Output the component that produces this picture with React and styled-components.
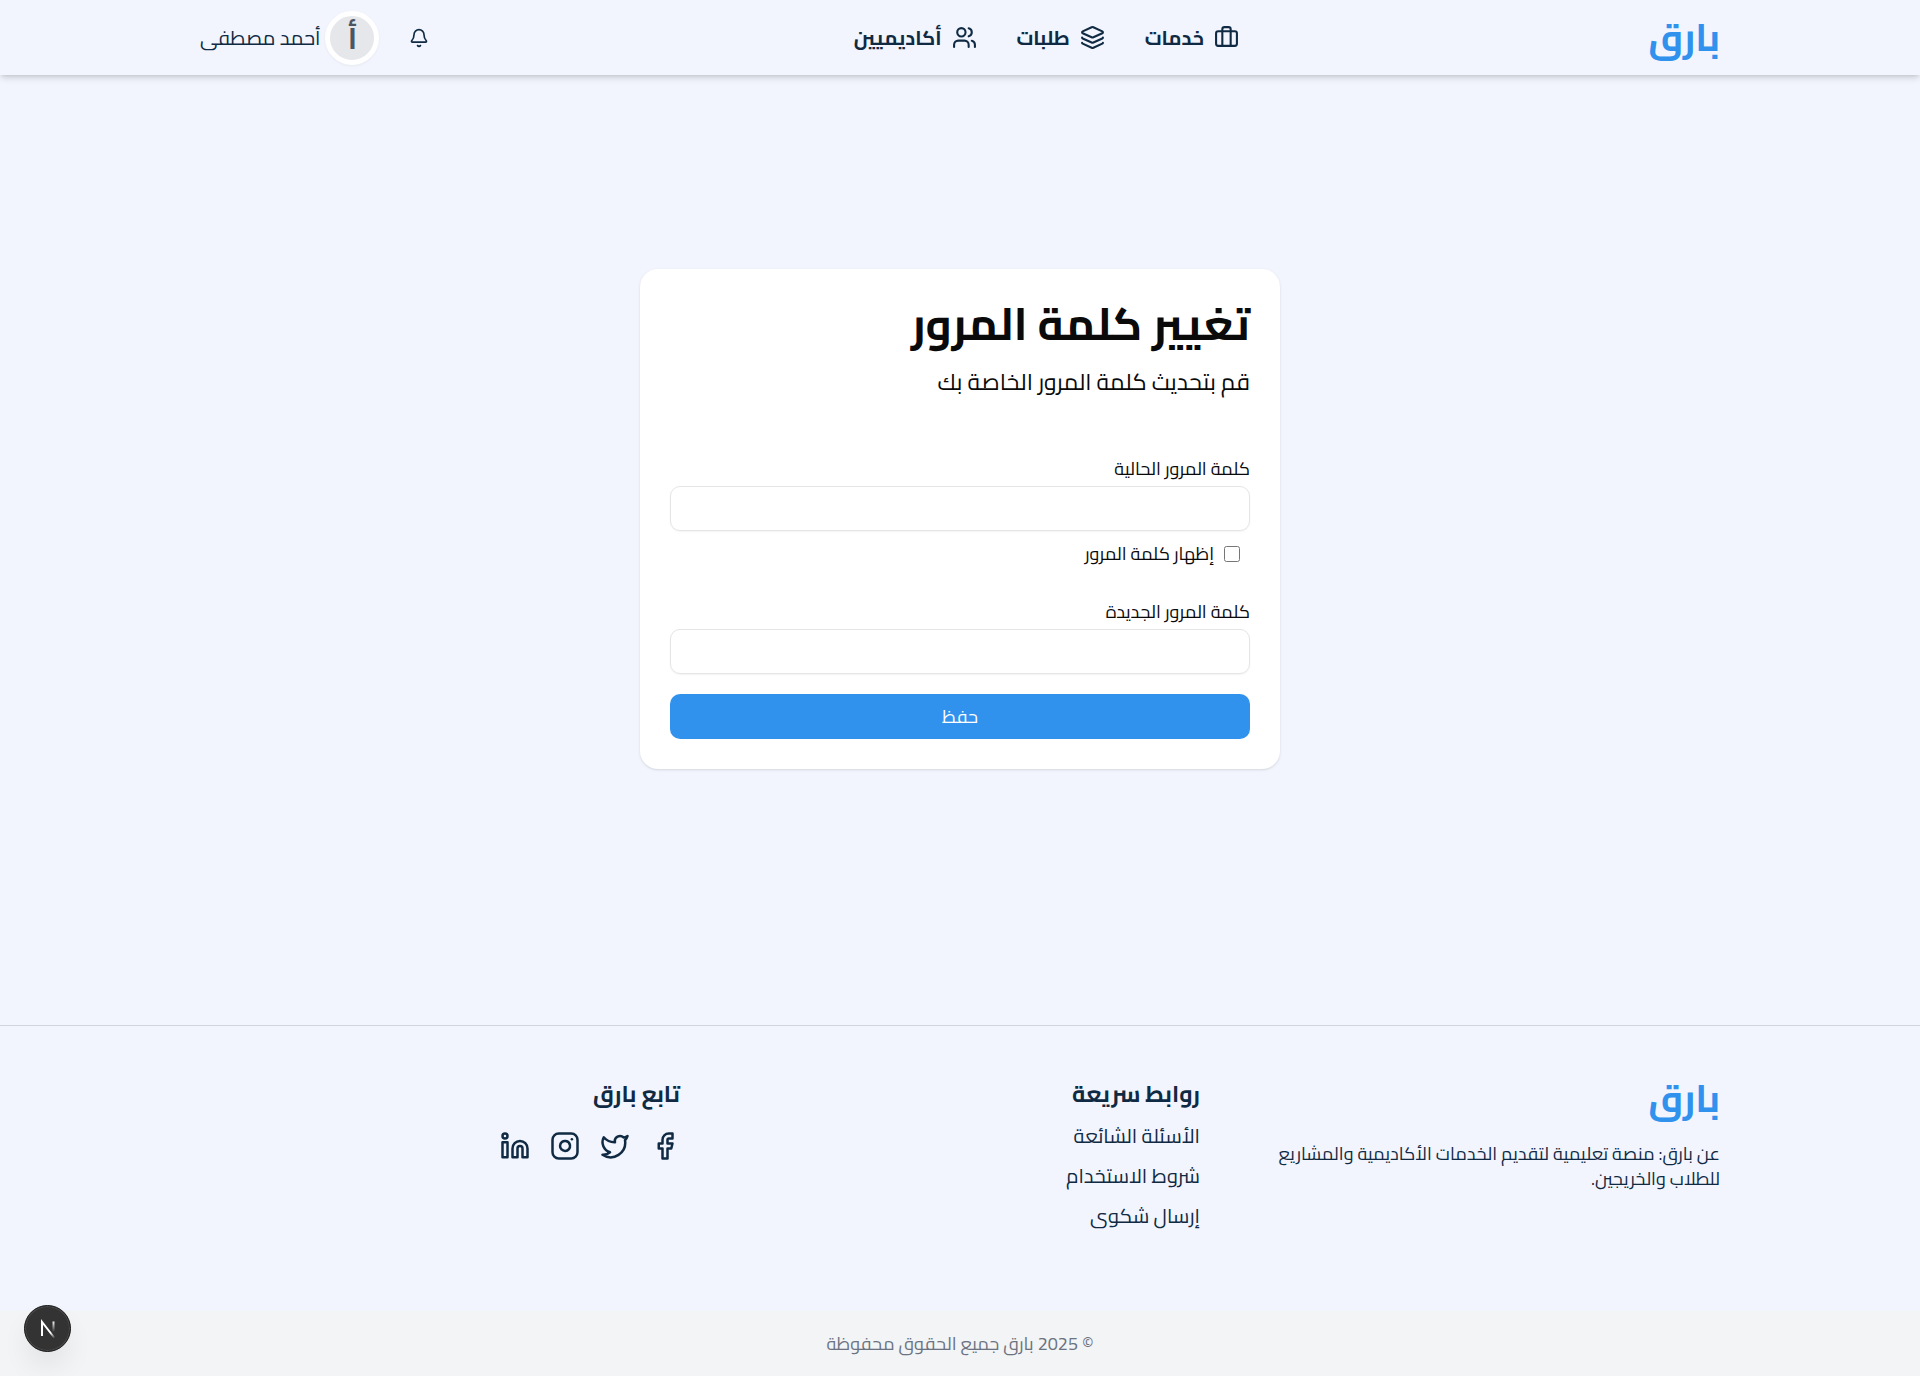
import React, { useState } from "react";
import styled, { createGlobalStyle } from "styled-components";
import {
  Bell,
  Briefcase,
  Layers,
  Users,
  Facebook,
  Twitter,
  Instagram,
  Linkedin,
} from "lucide-react";

const color = {
  page: "#f2f5fd",
  ink: "#102a43",
  primary: "#3092ed",
  line: "#e5e5e5",
};

const GlobalStyle = createGlobalStyle`
  *, *::before, *::after { box-sizing: border-box; }
  body {
    margin: 0;
    background: ${color.page};
    color: #0a0a0a;
    font-family: Cairo, "Noto Kufi Arabic", "Noto Sans", sans-serif;
    font-size: 20px;
    line-height: 30px;
  }
  h1, h2, p, ul { margin: 0; padding: 0; }
  ul { list-style: none; }
  a { color: inherit; text-decoration: none; }
  button, input { font: inherit; }
`;

const Page = styled.div`
  display: flex;
  flex-direction: column;
  min-height: 100vh;
`;

const Container = styled.div`
  width: 100%;
  max-width: 1520px;
  margin: 0 auto;
`;

const Header = styled.header`
  background: ${color.page};
  color: ${color.ink};
  box-shadow: 0 4px 6px -1px rgba(0, 0, 0, 0.1), 0 2px 4px -2px rgba(0, 0, 0, 0.1),
    0 2px 10px rgba(0, 0, 0, 0.06);
`;

const HeaderBar = styled(Container)`
  display: flex;
  align-items: center;
  justify-content: space-between;
  height: 75px;
`;

const Logo = styled.a`
  display: block;
  color: ${color.primary};
  font-size: 38px;
  font-weight: 700;
  line-height: 45px;
`;

const Nav = styled.nav`
  display: flex;
  gap: 40px;
`;

const NavLink = styled.a`
  display: flex;
  align-items: center;
  gap: 10px;
  font-weight: 700;
`;

const UserArea = styled.div`
  display: flex;
  align-items: center;
  gap: 15px;
`;

const IconButton = styled.button`
  display: flex;
  padding: 15px;
  border: 0;
  background: none;
  color: inherit;
  cursor: pointer;
`;

const Profile = styled.a`
  display: flex;
  align-items: center;
  gap: 5px;
`;

const Avatar = styled.span`
  display: flex;
  align-items: center;
  justify-content: center;
  width: 54px;
  height: 54px;
  border: 5px solid #fff;
  border-radius: 50%;
  background: #e5e7eb;
  box-shadow: 0 1px 3px rgba(0, 0, 0, 0.05);
  color: #4b5563;
  font-size: 30px;
  font-weight: 700;
`;

const Main = styled.main`
  flex: 1;
  display: flex;
  align-items: center;
  justify-content: center;
  padding: 30px 20px 92px;
`;

const Card = styled.section`
  width: 100%;
  max-width: 640px;
  padding: 30px;
  border-radius: 18px;
  background: #fff;
  box-shadow: 0 1px 3px rgba(0, 0, 0, 0.1), 0 1px 2px -1px rgba(0, 0, 0, 0.1);
`;

const Title = styled.h1`
  font-size: 45px;
  font-weight: 700;
  line-height: 50px;
`;

const Subtitle = styled.p`
  margin-top: 15px;
  font-size: 23px;
  line-height: 35px;
`;

const Form = styled.form`
  display: flex;
  flex-direction: column;
  margin-top: 57px;
  font-size: 18px;
  line-height: 25px;
`;

const Field = styled.div`
  display: flex;
  flex-direction: column;
  gap: 5px;
`;

const TextInput = styled.input`
  width: 100%;
  height: 45px;
  padding: 5px 15px;
  border: 1px solid ${color.line};
  border-radius: 10px;
  background: transparent;
  box-shadow: 0 1px 2px rgba(0, 0, 0, 0.05);
`;

const CheckLabel = styled.label`
  display: flex;
  align-items: center;
  gap: 10px;
  margin: 10px 10px 33px;
`;

const Checkbox = styled.input`
  width: 16px;
  height: 16px;
  margin: 0;
`;

const SubmitButton = styled.button`
  height: 45px;
  margin-top: 20px;
  border: 0;
  border-radius: 10px;
  background: ${color.primary};
  color: #fff;
  cursor: pointer;
`;

const Footer = styled.footer`
  border-top: 1px solid #d1d5db;
  color: ${color.ink};
`;

const FooterGrid = styled(Container)`
  display: grid;
  grid-template-columns: repeat(3, 1fr);
  gap: 40px;
  padding: 50px 0 80px;
`;

const About = styled.p`
  max-width: 448px;
  margin-top: 20px;
  font-size: 18px;
  line-height: 25px;
`;

const FooterHeading = styled.h2`
  font-size: 23px;
  font-weight: 700;
  line-height: 35px;
`;

const LinkList = styled.ul`
  display: grid;
  gap: 10px;
  margin-top: 10px;
`;

const SocialList = styled.ul`
  display: flex;
  gap: 20px;
  margin-top: 20px;

  a { display: block; }
  svg { display: block; }
`;

const Copyright = styled.p`
  padding: 20px;
  background: #f3f4f6;
  color: #6b7280;
  font-size: 18px;
  line-height: 25px;
  text-align: center;
`;

const DevBadge = styled.button`
  position: fixed;
  left: 24px;
  bottom: 24px;
  display: flex;
  align-items: center;
  justify-content: center;
  width: 47px;
  height: 47px;
  padding: 0;
  border: 1px solid #171717;
  border-radius: 50%;
  background: #333;
  box-shadow: inset 0 0 0 1px #4a4a4a, 0 16px 32px -8px rgba(0, 0, 0, 0.14);
  cursor: pointer;
`;

const navItems = [
  { label: "خدمات", Icon: Briefcase },
  { label: "طلبات", Icon: Layers },
  { label: "أكاديميين", Icon: Users },
];

const quickLinks = ["الأسئلة الشائعة", "شروط الاستخدام", "إرسال شكوى"];

const socials = [
  { label: "Facebook", Icon: Facebook },
  { label: "Twitter", Icon: Twitter },
  { label: "Instagram", Icon: Instagram },
  { label: "LinkedIn", Icon: Linkedin },
];

function NextMark() {
  return (
    <svg width="18" height="20" viewBox="0 0 18 20" fill="none" aria-hidden="true">
      <defs>
        <linearGradient id="diag" x1="9" y1="10" x2="16" y2="19" gradientUnits="userSpaceOnUse">
          <stop offset="0.4" stopColor="#fff" />
          <stop offset="1" stopColor="#fff" stopOpacity="0" />
        </linearGradient>
        <linearGradient id="stem" x1="14" y1="2" x2="14" y2="13" gradientUnits="userSpaceOnUse">
          <stop stopColor="#fff" />
          <stop offset="1" stopColor="#fff" stopOpacity="0" />
        </linearGradient>
      </defs>
      <path d="M3 17V3L15.500 19" stroke="url(#diag)" strokeWidth="2" />
      <path d="M14.500 2.500V13" stroke="url(#stem)" strokeWidth="2" />
    </svg>
  );
}

export default function App() {
  const [visible, setVisible] = useState(false);

  return (
    <Page dir="rtl" lang="ar">
      <GlobalStyle />
      <Header>
        <HeaderBar>
          <Logo href="#">بارق</Logo>
          <Nav>
            {navItems.map(({ label, Icon }) => (
              <NavLink href="#" key={label}>
                <Icon size={25} />
                {label}
              </NavLink>
            ))}
          </Nav>
          <UserArea>
            <IconButton type="button" aria-label="الإشعارات">
              <Bell size={20} />
            </IconButton>
            <Profile href="#">
              <Avatar>أ</Avatar>
              أحمد مصطفى
            </Profile>
          </UserArea>
        </HeaderBar>
      </Header>

      <Main>
        <Card>
          <Title>تغيير كلمة المرور</Title>
          <Subtitle>قم بتحديث كلمة المرور الخاصة بك</Subtitle>
          <Form onSubmit={(e) => e.preventDefault()}>
            <Field>
              <label htmlFor="current">كلمة المرور الحالية</label>
              <TextInput id="current" type={visible ? "text" : "password"} />
            </Field>
            <CheckLabel>
              <Checkbox
                type="checkbox"
                checked={visible}
                onChange={(e) => setVisible(e.target.checked)}
              />
              إظهار كلمة المرور
            </CheckLabel>
            <Field>
              <label htmlFor="next">كلمة المرور الجديدة</label>
              <TextInput id="next" type={visible ? "text" : "password"} />
            </Field>
            <SubmitButton type="submit">حفظ</SubmitButton>
          </Form>
        </Card>
      </Main>

      <Footer>
        <FooterGrid>
          <div>
            <Logo href="#">بارق</Logo>
            <About>
              عن بارق: منصة تعليمية لتقديم الخدمات الأكاديمية والمشاريع للطلاب والخريجين.
            </About>
          </div>
          <div>
            <FooterHeading>روابط سريعة</FooterHeading>
            <LinkList>
              {quickLinks.map((label) => (
                <li key={label}>
                  <a href="#">{label}</a>
                </li>
              ))}
            </LinkList>
          </div>
          <div>
            <FooterHeading>تابع بارق</FooterHeading>
            <SocialList>
              {socials.map(({ label, Icon }) => (
                <li key={label}>
                  <a href="#" aria-label={label}>
                    <Icon size={30} />
                  </a>
                </li>
              ))}
            </SocialList>
          </div>
        </FooterGrid>
        <Copyright>© 2025 بارق جميع الحقوق محفوظة</Copyright>
      </Footer>

      <DevBadge type="button" aria-label="Next.js">
        <NextMark />
      </DevBadge>
    </Page>
  );
}
